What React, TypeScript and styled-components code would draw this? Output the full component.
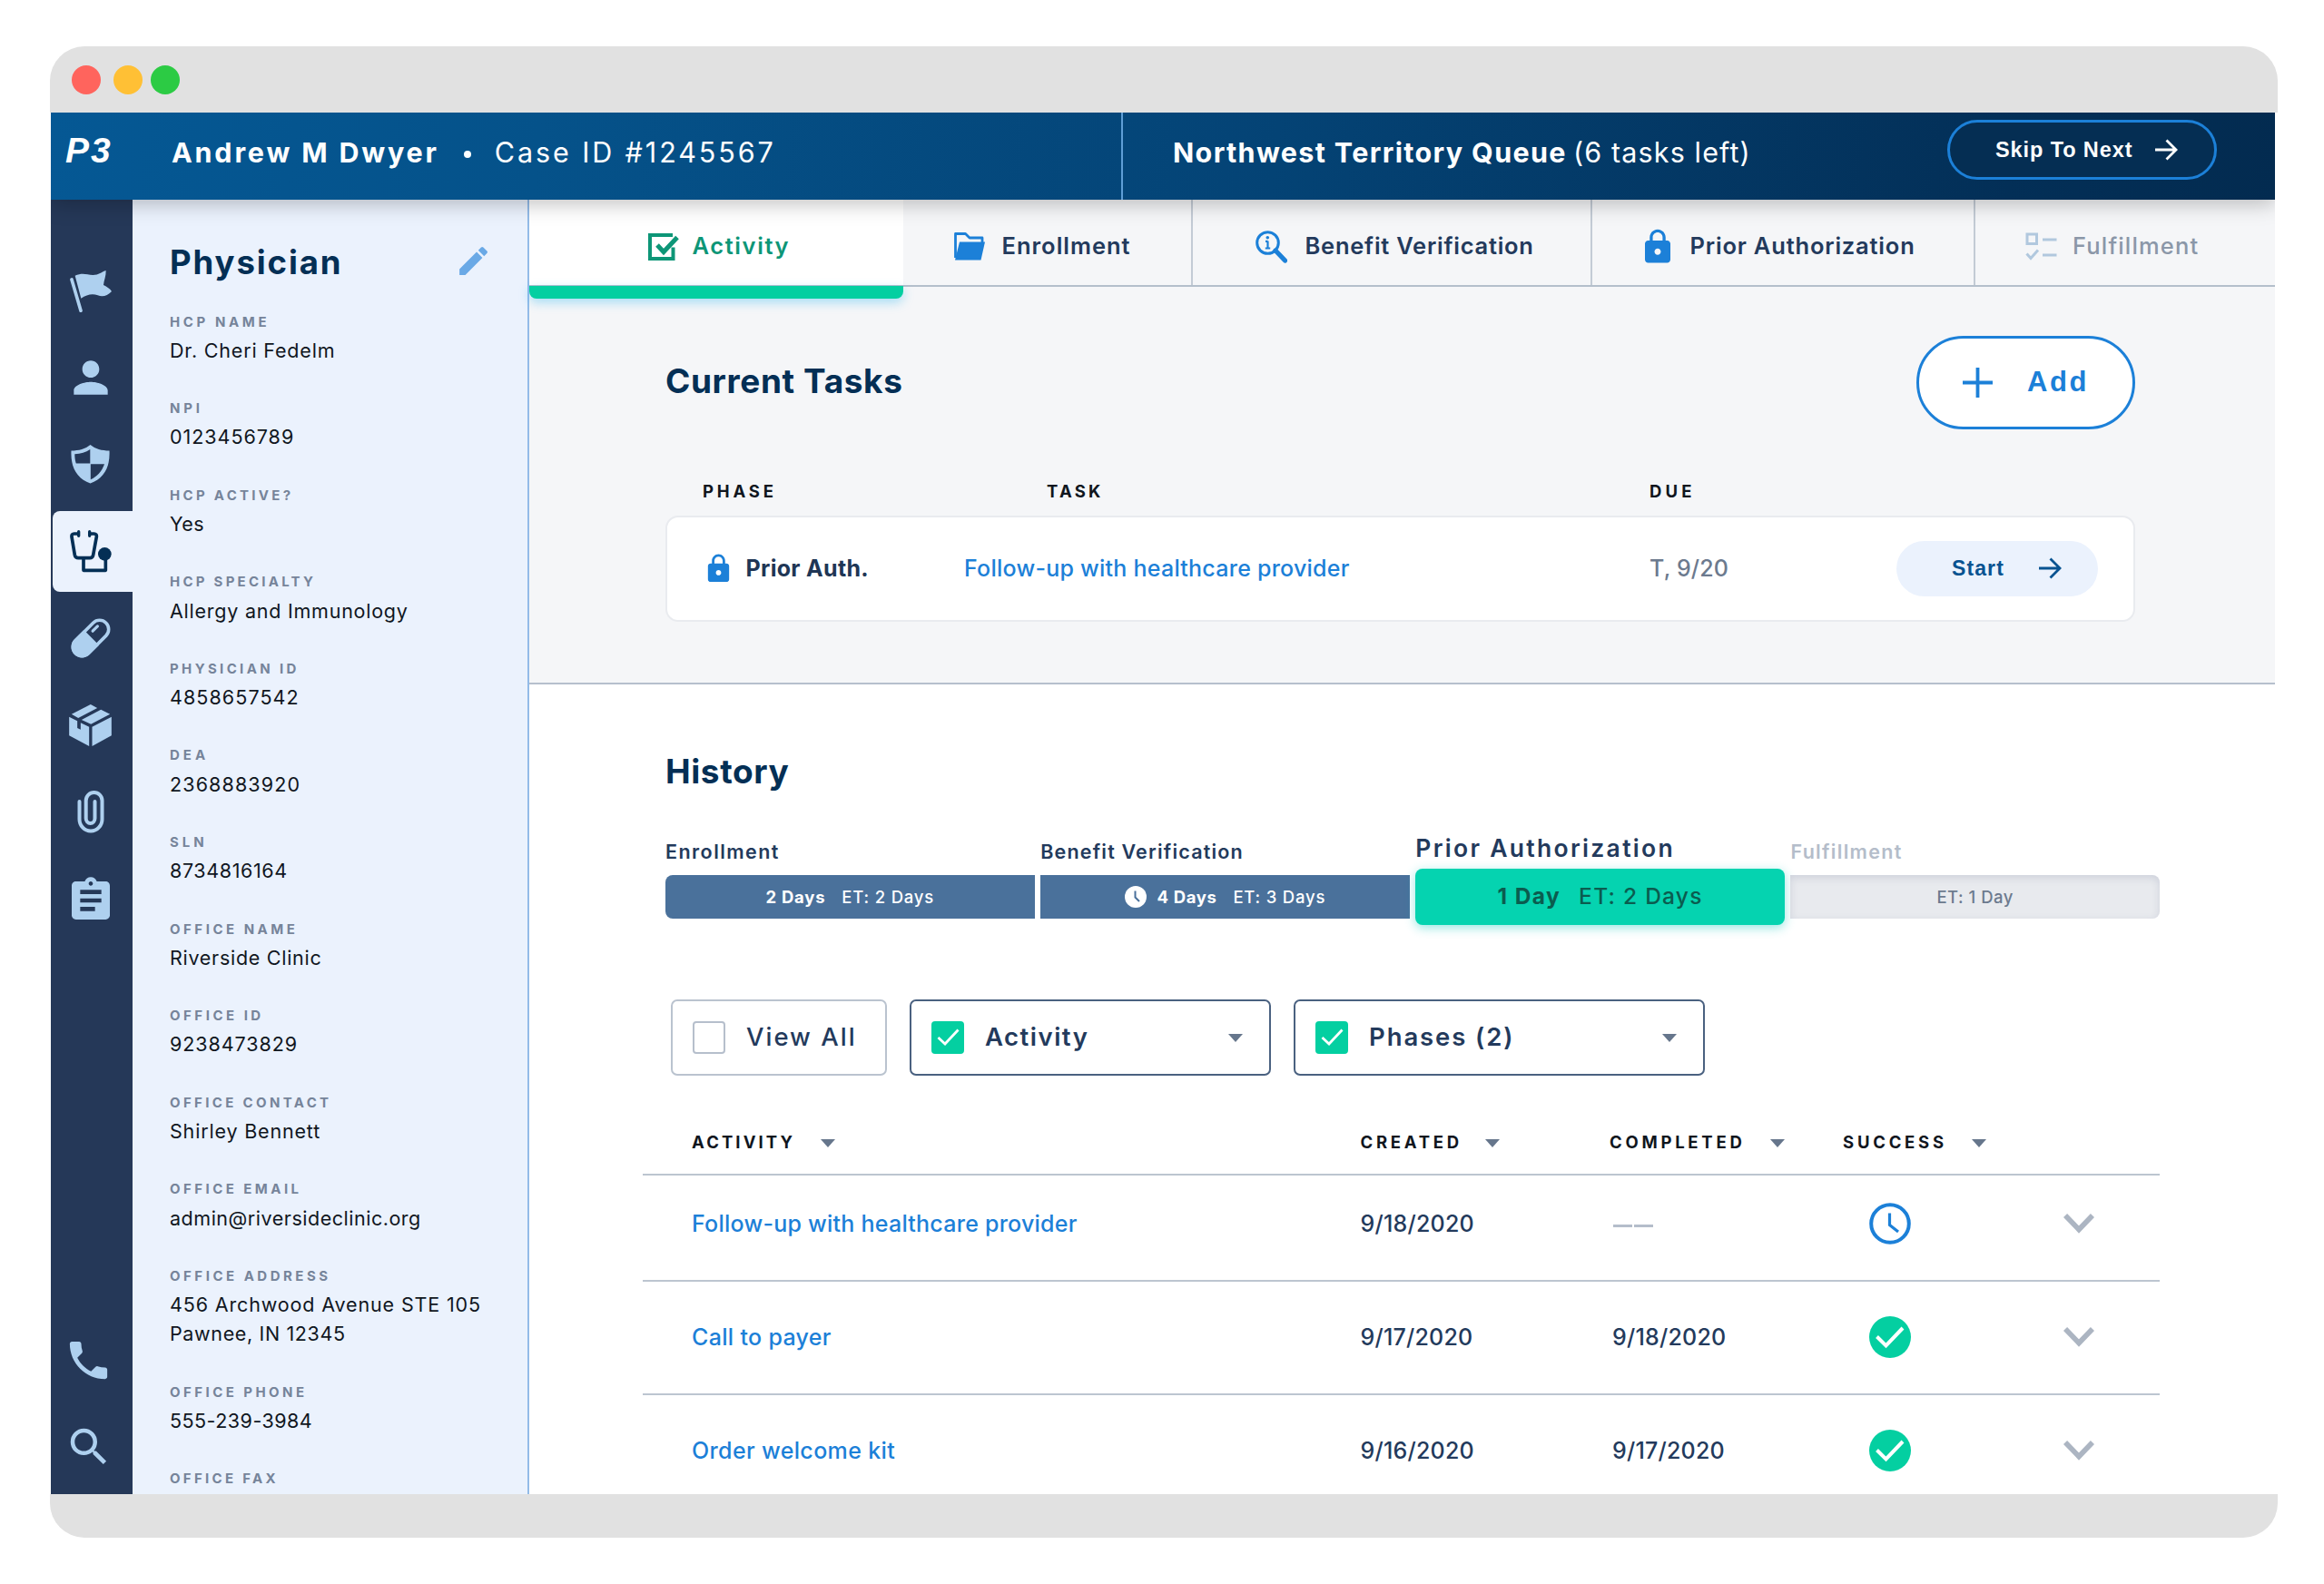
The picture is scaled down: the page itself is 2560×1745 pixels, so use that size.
import React from "react";
import styled, { createGlobalStyle, css } from "styled-components";
import { MdPerson, MdPhone, MdSearch, MdAssignment, MdLock, MdEdit } from "react-icons/md";

const c = {
  navy: "#042f55",
  ink: "#233a5c",
  rail: "#253858",
  ice: "#aed0ef",
  pale: "#ebf2fd",
  blue: "#1c80d8",
  green: "#04cfa1",
  line: "#bcc5d0",
  grey: "#6c7a8e",
};

const GlobalStyle = createGlobalStyle`
  * { box-sizing: border-box; }
  body { margin: 0; background: #fff; font-family: "Inter", "Open Sans", sans-serif; }
`;

/* ---------- text ---------- */
const Text = styled.span<{ $size: number; $weight?: number; $ls?: number; $color?: string }>`
  font-size: ${(p) => p.$size}px;
  font-weight: ${(p) => p.$weight ?? 400};
  letter-spacing: ${(p) => p.$ls ?? 0}px;
  color: ${(p) => p.$color ?? c.ink};
  white-space: nowrap;
  line-height: 1.2;
`;
const ButtonText = styled(Text)`
  font-family: "Liberation Sans", Arial, sans-serif;
  padding-top: 1px;
`;

/* ---------- window ---------- */
const Window = styled.div`
  margin: 51px 0 0 55px;
  width: 2454px;
  height: 1643px;
  border-radius: 38px;
  overflow: hidden;
  display: flex;
  flex-direction: column;
`;
const TitleBar = styled.div`
  height: 73px;
  flex: none;
  background: #e1e1e1;
  display: flex;
  align-items: center;
  padding-left: 24px;
`;
const Light = styled.i<{ $color: string; $gap: number }>`
  width: 32px;
  height: 32px;
  border-radius: 50%;
  background: ${(p) => p.$color};
  margin-right: ${(p) => p.$gap}px;
`;
const BottomBar = styled.div`
  flex: none;
  height: 48px;
  background: #e1e1e1;
`;
const Body = styled.div`
  height: 1522px;
  flex: none;
  width: 2450px;
  margin-left: 1px;
  overflow: hidden;
  display: flex;
  flex-direction: column;
`;

/* ---------- header ---------- */
const Header = styled.header`
  position: relative;
  z-index: 3;
  height: 96px;
  flex: none;
  display: flex;
  color: #fff;
  background: linear-gradient(97deg, #055894 0%, #05528a 22%, #044375 55%, #032f57 88%, #032b50 100%);
  box-shadow: 0 4px 22px rgba(0, 0, 0, 0.26);
`;
const HeaderLeft = styled.div`
  width: 1181px;
  border-right: 2px solid #5f9ed6;
  padding: 0 0 8px 16px;
  display: flex;
  align-items: center;
`;
const HeaderRight = styled.div`
  flex: 1;
  padding: 0 64px 8px 55px;
  display: flex;
  align-items: center;
  gap: 7px;
`;
const Brand = styled.span`
  width: 117px;
  font: italic 700 39px "Liberation Sans", Arial, sans-serif;
  letter-spacing: 2px;
  margin-bottom: 5px;
`;
const Bullet = styled.i`
  width: 8px;
  height: 8px;
  border-radius: 50%;
  background: #fff;
  margin: 4px 26px 0 27px;
`;
const SkipButton = styled.button`
  margin: 0 0 6px auto;
  width: 297px;
  height: 66px;
  border: 3px solid ${c.blue};
  border-radius: 33px;
  background: #052e53;
  padding: 0 40px 0 50px;
  display: flex;
  align-items: center;
  justify-content: space-between;
`;

/* ---------- rail ---------- */
const Columns = styled.div`
  flex: 1;
  display: flex;
  min-height: 0;
`;
const Rail = styled.nav`
  width: 90px;
  flex: none;
  background: ${c.rail};
  padding: 53px 0 4px;
  display: flex;
  flex-direction: column;
`;
const RailItem = styled.div<{ $nudge?: number; $drop?: number }>`
  height: 95.6px;
  flex: none;
  display: flex;
  align-items: center;
  justify-content: center;
  color: ${c.ice};
  padding-right: ${(p) => p.$nudge ?? 3}px;
  padding-top: ${(p) => p.$drop ?? 0}px;
`;
const RailActive = styled.div`
  margin: 3px 0 3.6px 2px;
  height: 89px;
  flex: none;
  border-radius: 8px 0 0 8px;
  background: ${c.pale};
  display: flex;
  align-items: center;
  justify-content: center;
  padding-right: 4px;
`;
const RailSpacer = styled.div`
  flex: 1;
`;

/* ---------- physician panel ---------- */
const Panel = styled.aside`
  width: 437px;
  flex: none;
  background: ${c.pale};
  border-right: 2px solid #93bbe8;
  padding: 44px 0 0 41px;
  overflow: hidden;
`;
const PanelHead = styled.div`
  height: 46px;
  padding-right: 39px;
  margin-bottom: 34.6px;
  display: flex;
  align-items: center;
  justify-content: space-between;
  color: #6aa9e6;
`;
const PanelTitle = styled.h1`
  margin: 0;
  padding-top: 4px;
  font-size: 36.5px;
  font-weight: 700;
  line-height: 46px;
  letter-spacing: 1.9px;
  color: ${c.navy};
`;
const Field = styled.div`
  margin-bottom: 38.4px;
`;
const FieldLabel = styled.div<{ $ls: number }>`
  font-size: 15px;
  font-weight: 700;
  line-height: 20px;
  letter-spacing: ${(p) => p.$ls}px;
  color: #76849a;
  margin-bottom: 5.2px;
`;
const FieldValue = styled.div<{ $ls: number }>`
  font-size: 21.5px;
  font-weight: 400;
  line-height: 32px;
  letter-spacing: ${(p) => p.$ls - 0.08}px;
  color: #10161e;
`;

/* ---------- tabs ---------- */
const Main = styled.main`
  flex: 1;
  min-width: 0;
  background: #fff;
`;
const Tabs = styled.div`
  height: 96px;
  display: flex;
  background: #f5f6f8;
  border-bottom: 2px solid #b4bfcb;
`;
const Tab = styled.div<{ $w: number; $pad: number; $gap: number; $active?: boolean; $last?: boolean }>`
  position: relative;
  width: ${(p) => p.$w}px;
  flex: none;
  display: flex;
  align-items: center;
  gap: ${(p) => p.$gap}px;
  padding: ${(p) => (p.$last ? 8 : 9.5)}px 0 0 ${(p) => p.$pad}px;
  color: ${c.blue};
  border-right: ${(p) => (p.$active || p.$last ? "none" : "2px solid #c3cbd5")};
  ${(p) =>
    p.$active &&
    css`
      background: #fff;
      &::after {
        content: "";
        position: absolute;
        left: 0;
        right: 0;
        top: 95px;
        height: 14px;
        background: ${c.green};
        border-radius: 0 0 8px 8px;
        box-shadow: 0 4px 12px rgba(40, 180, 240, 0.4);
      }
    `}
`;

/* ---------- current tasks ---------- */
const Current = styled.section`
  height: 438px;
  background: #f5f6f8;
  border-bottom: 2px solid #b6c0cd;
  padding: 54px 154px 0 150px;
`;
const CurrentHead = styled.div`
  height: 102px;
  display: flex;
  align-items: center;
  justify-content: space-between;
`;
const SectionTitle = styled.h2<{ $ls: number }>`
  margin: 0 0 3px 0;
  font-size: 37px;
  font-weight: 700;
  line-height: 46px;
  letter-spacing: ${(p) => p.$ls}px;
  color: ${c.navy};
`;
const AddButton = styled.button`
  width: 241px;
  height: 103px;
  border: 3.5px solid ${c.blue};
  border-radius: 52px;
  background: #fff;
  padding: 0 0 0 48px;
  display: flex;
  align-items: center;
  gap: 38px;
`;
const TaskHead = styled.div`
  display: grid;
  grid-template-columns: 379px 664px 1fr;
  padding-left: 41px;
  margin-top: 57px;
  height: 24px;
  align-items: center;
`;
const TaskCard = styled.div`
  margin-top: 15px;
  height: 117px;
  background: #fff;
  border: 2px solid #e9ebef;
  border-radius: 14px;
  padding: 0 39px 1px 45px;
  display: grid;
  grid-template-columns: 282px 755px 1fr auto;
  align-items: center;
`;
const Phase = styled.div`
  display: flex;
  align-items: center;
  gap: 12.5px;
  color: ${c.blue};
  margin-left: -6px;
`;
const StartButton = styled.button`
  width: 222px;
  height: 61px;
  border: 0;
  border-radius: 31px;
  background: ${c.pale};
  padding: 0 40px 0 61px;
  display: flex;
  align-items: center;
  justify-content: space-between;
`;

/* ---------- history ---------- */
const History = styled.section`
  padding: 73px 127px 0 125px;
`;
const HistoryHead = styled.div`
  height: 46px;
  padding-left: 25px;
`;
const Timeline = styled.div`
  height: 95px;
  margin: 44px 0 0 25px;
  display: grid;
  grid-template-columns: repeat(4, 1fr);
  column-gap: 6.6px;
`;
const Segment = styled.div<{ $current?: boolean }>`
  display: flex;
  flex-direction: column;
  justify-content: flex-end;
  margin-bottom: ${(p) => (p.$current ? -7 : 0)}px;
`;
const SegmentLabel = styled.div<{ $current?: boolean; $muted?: boolean; $ls: number }>`
  font-size: ${(p) => (p.$current ? 26.5 : 21.5)}px;
  line-height: ${(p) => (p.$current ? 32 : 28)}px;
  margin-bottom: ${(p) => (p.$current ? 7 : 12.4)}px;
  font-weight: 600;
  letter-spacing: ${(p) => p.$ls}px;
  color: ${(p) => (p.$muted ? "#b4bdca" : c.ink)};
`;
const Bar = styled.div<{ $kind: "first" | "mid" | "current" | "future" }>`
  display: flex;
  align-items: center;
  justify-content: center;
  flex: none;
  height: ${(p) => (p.$kind === "current" ? 62 : 48)}px;
  border-radius: ${(p) => ({ first: "8px 0 0 8px", mid: "0", current: "8px", future: "0 8px 8px 0" })[p.$kind]};
  background: ${(p) => ({ first: "#4a719b", mid: "#4a719b", current: "#05d3b0", future: "#e8eaee" })[p.$kind]};
  gap: ${(p) => (p.$kind === "current" ? 20 : 18)}px;
  ${(p) => p.$kind === "current" && css`box-shadow: 0 3px 12px rgba(20, 200, 190, 0.45);`}
  ${(p) => p.$kind === "future" && css`box-shadow: inset 0 3px 8px rgba(120, 130, 160, 0.24);`}
`;
const Late = styled.span`
  display: flex;
  align-items: center;
  gap: 12px;
`;
const Filters = styled.div`
  margin: 88.5px 0 0 31px;
  display: flex;
  gap: 25px;
`;
const Filter = styled.div<{ $w: number; $on?: boolean }>`
  width: ${(p) => p.$w}px;
  height: 84px;
  border: 2.5px solid ${(p) => (p.$on ? "#4a6180" : "#bac3cf")};
  border-radius: 7px;
  padding: 0 29px 0 22px;
  display: flex;
  align-items: center;
  gap: 23px;
`;
const Check = styled.span<{ $on?: boolean }>`
  width: 36px;
  height: 36px;
  flex: none;
  border-radius: 4px;
  display: flex;
  align-items: center;
  justify-content: center;
  background: ${(p) => (p.$on ? c.green : "#fff")};
  border: ${(p) => (p.$on ? "none" : "2.5px solid #b6bfcc")};
`;
const Caret = styled.i<{ $push?: boolean }>`
  width: 0;
  height: 0;
  border: 8px solid transparent;
  border-top: 9px solid #66768c;
  border-bottom: 0;
  margin-left: ${(p) => (p.$push ? "auto" : "0")};
  margin-top: 2px;
`;
const Row = styled.div<{ $h: number; $lift?: number }>`
  height: ${(p) => p.$h}px;
  padding: 0 0 ${(p) => p.$lift ?? 0}px 54px;
  border-bottom: 2px solid ${c.line};
  display: grid;
  grid-template-columns: 736.5px 274.5px 257px 1fr;
  align-items: center;
`;
const HeadRow = styled(Row)`
  margin-top: 47px;
`;
const HeadCell = styled.div<{ $gap: number }>`
  display: flex;
  align-items: center;
  gap: ${(p) => p.$gap}px;
`;
const StatusCell = styled.div`
  display: flex;
  align-items: center;
  justify-content: space-between;
  padding: 0 72px 0 28.5px;
`;
const Dashes = styled.span`
  display: flex;
  gap: 2px;
  margin: 4px 0 0 4px;
  i { width: 21px; height: 3px; background: #b4bdca; }
`;
const DateText = styled(Text)`
  padding-left: 3px;
`;

/* ---------- icons ---------- */
const FlagIcon = () => (
  <svg width="46" height="46" viewBox="0 0 138 138" fill={c.ice}>
    <path d="M6 30 L36 133" stroke={c.ice} strokeWidth="11" strokeLinecap="round" />
    <path d="M17 17 C42 6 55 14 76 15 C95 15 106 4 119 0 C120 18 112 34 111 48 C120 53 133 60 138 69 C124 84 108 88 92 82 C72 75 55 81 37 92 Z" />
  </svg>
);
const ShieldIcon = () => (
  <svg width="43" height="43" viewBox="0 0 43 43">
    <path fill={c.ice} d="M21.500 0 C27 4.500 34 6.500 42.500 6.500 C43.500 25 36 37.500 21.500 42.500 C7 37.500 -.5 25 .5 6.500 C9 6.500 16 4.500 21.500 0Z" />
    <path fill={c.rail} d="M21.300 5 V20.600 H5.800 C4.600 17 4.300 13.500 4.300 10.200 C11 10 16.500 8.300 21.300 5Z" />
    <path fill={c.rail} d="M21.800 21.200 H37 C34.400 29 29 35 21.800 38.200Z" />
  </svg>
);
const StethoscopeIcon = () => (
  <svg width="47" height="47" viewBox="0 0 141 141" fill="none" stroke={c.navy} strokeWidth="11" strokeLinejoin="round">
    <path d="M28 12 H14 Q5 12 6 22 L16 82 Q18 92 28 92 H66 Q75 92 77 82 L88 22 Q89 12 80 12 H66" />
    <path d="M29 5 V19 M65 5 V19" strokeLinecap="round" strokeWidth="10" />
    <path d="M45 94 V133 H118 V90" />
    <circle cx="115" cy="79" r="22" fill={c.navy} stroke="none" />
  </svg>
);
const PillIcon = () => (
  <svg width="46" height="46" viewBox="0 0 46 46">
    <g transform="rotate(45 23 23)">
      <rect x="13" y="-.7" width="20" height="47.400" rx="10" fill="none" stroke={c.ice} strokeWidth="3.600" />
      <path d="M11.200 22 H34.800 V36.700 A11.800 11.800 0 0 1 11.200 36.700Z" fill={c.ice} />
      <path d="M19 8.500 V16" stroke={c.ice} strokeWidth="3.200" strokeLinecap="round" />
    </g>
  </svg>
);
const BoxIcon = () => (
  <svg width="47" height="46" viewBox="0 0 140 138" fill={c.ice}>
    <path d="M8 32 L71 0 L93 12 L30 45Z" />
    <path d="M41 51 L105 17 L135 32 L72 65Z" />
    <path d="M0 41 L27 55 V78 L38 83 V61 L66 74 V138 L0 103Z" />
    <path d="M76 74 L140 41 V103 L76 138Z" />
  </svg>
);
const ClipIcon = () => (
  <svg width="30" height="47" viewBox="0 0 30 47" fill="none" stroke={c.ice} strokeWidth="4" strokeLinecap="round">
    <path d="M2.500 12 V31.500 A12.500 13 0 0 0 27.500 31.500 V11 A8.900 9 0 0 0 9.700 11 V30.500 A4.900 5.500 0 0 0 19.500 30.500 V12" />
  </svg>
);
const ArrowIcon = ({ color }: { color: string }) => (
  <svg width="25" height="24" viewBox="0 0 25 24" fill="none" stroke={color} strokeWidth="2.800">
    <path d="M0 12 H22.500 M12.500 1.500 L23 12 L12.500 22.500" />
  </svg>
);
const PlusIcon = () => (
  <svg width="33" height="33" viewBox="0 0 33 33" stroke={c.blue} strokeWidth="3.800">
    <path d="M16.500 0 V33 M0 16.500 H33" />
  </svg>
);
const ActivityIcon = () => (
  <svg width="34" height="30" viewBox="0 0 34 30" fill="none" stroke="#0d9677">
    <path d="M27 2 H2 V28 H27.500 V15.500" strokeWidth="4" />
    <path d="M10 13 L17 20.500 L32 4.500" strokeWidth="5" />
  </svg>
);
const FolderIcon = () => (
  <svg width="34" height="31" viewBox="0 0 34 31">
    <path d="M1.500 28 V1.500 H12.500 L17 6 H31 V12" fill="none" stroke={c.blue} strokeWidth="2.800" strokeLinejoin="round" />
    <path d="M6 10.500 H34 L29.500 30.500 H1 Z" fill={c.blue} />
  </svg>
);
const InfoSearchIcon = () => (
  <svg width="35" height="36" viewBox="0 0 35 36" fill="none" stroke={c.blue}>
    <circle cx="13.500" cy="13.500" r="11.800" strokeWidth="3" />
    <path d="M22 22 L32.500 33" strokeWidth="5.200" strokeLinecap="round" />
    <path d="M13.500 11.500 V20 M11 11.800 H13.500 M10.800 19.500 H16.200" strokeWidth="2.200" />
    <circle cx="13.300" cy="7.700" r="1.800" fill={c.blue} stroke="none" />
  </svg>
);
const ChecklistIcon = () => (
  <svg width="35" height="31" viewBox="0 0 35 31" fill="none" stroke="#b1c8de" strokeWidth="3">
    <path d="M2 2 H12.500 V12.500 H2Z M19 8 H34.500 M19 25 H34.500 M1.500 23.500 L6 28.500 L14 19.500" />
  </svg>
);
const CheckMark = () => (
  <svg width="25" height="19" viewBox="0 0 25 19" fill="none" stroke="#fff" strokeWidth="2.800">
    <path d="M1.500 10 L9 17 L23.500 1.500" />
  </svg>
);
const SmallClock = () => (
  <svg width="24" height="24" viewBox="0 0 24 24">
    <circle cx="12" cy="12" r="12" fill="#fff" />
    <path d="M11.500 5.500 V12.500 L16 17" fill="none" stroke="#4a719b" strokeWidth="2" />
  </svg>
);
const PendingIcon = () => (
  <svg width="46" height="46" viewBox="0 0 46 46" fill="none" stroke={c.blue}>
    <circle cx="23" cy="23" r="20.800" strokeWidth="4" />
    <path d="M22.500 11.500 V24.500 L32 32" strokeWidth="3.200" />
  </svg>
);
const DoneIcon = () => (
  <svg width="46" height="46" viewBox="0 0 46 46">
    <circle cx="23" cy="23" r="23" fill={c.green} />
    <path d="M8.500 22.500 L18.500 32.500 L37 13" fill="none" stroke="#fff" strokeWidth="4" />
  </svg>
);
const ChevronIcon = () => (
  <svg width="34" height="22" viewBox="0 0 34 22" fill="none" stroke="#acb5c2" strokeWidth="5.800">
    <path d="M2 2 L17 17.500 L32 2" />
  </svg>
);

/* ---------- data ---------- */
const fields: { label: string; ls: number; values: [string, number][] }[] = [
  { label: "HCP NAME", ls: 3.6, values: [["Dr. Cheri Fedelm", 0.9]] },
  { label: "NPI", ls: 3.8, values: [["0123456789", 1.05]] },
  { label: "HCP ACTIVE?", ls: 3.3, values: [["Yes", 0.5]] },
  { label: "HCP SPECIALTY", ls: 3.25, values: [["Allergy and Immunology", 0.84]] },
  { label: "PHYSICIAN ID", ls: 3.35, values: [["4858657542", 1.15]] },
  { label: "DEA", ls: 4, values: [["2368883920", 1.2]] },
  { label: "SLN", ls: 4, values: [["8734816164", 0.7]] },
  { label: "OFFICE NAME", ls: 3.5, values: [["Riverside Clinic", 0.8]] },
  { label: "OFFICE ID", ls: 3.5, values: [["9238473829", 1.0]] },
  { label: "OFFICE CONTACT", ls: 3.35, values: [["Shirley Bennett", 0.9]] },
  { label: "OFFICE EMAIL", ls: 3.45, values: [["admin@riversideclinic.org", 0.6]] },
  { label: "OFFICE ADDRESS", ls: 3.5, values: [["456 Archwood Avenue STE 105", 0.94], ["Pawnee, IN 12345", 0.72]] },
  { label: "OFFICE PHONE", ls: 3.45, values: [["555-239-3984", 0.55]] },
  { label: "OFFICE FAX", ls: 3.3, values: [] },
];

const heads: { label: string; ls: number; gap: number }[] = [
  { label: "ACTIVITY", ls: 3.1, gap: 28 },
  { label: "CREATED", ls: 3.75, gap: 25.5 },
  { label: "COMPLETED", ls: 3.75, gap: 27 },
  { label: "SUCCESS", ls: 3.77, gap: 27 },
];

const rows = [
  { name: "Follow-up with healthcare provider", ls: 0.24, created: "9/18/2020", completed: null, h: 117.6, lift: 8 },
  { name: "Call to payer", ls: 0.32, created: "9/17/2020", completed: "9/18/2020", h: 124.6, lift: 0 },
  { name: "Order welcome kit", ls: 0.36, created: "9/16/2020", completed: "9/17/2020", h: 124.6, lift: 0 },
];

export default function App() {
  return (
    <>
      <GlobalStyle />
      <Window>
        <TitleBar>
          <Light $color="#ff645d" $gap={14} />
          <Light $color="#ffc035" $gap={9} />
          <Light $color="#2ccb44" $gap={0} />
        </TitleBar>
        <Body>
          <Header>
            <HeaderLeft>
              <Brand>P3</Brand>
              <Text $size={30.5} $weight={700} $ls={2.8} $color="#fff">Andrew M Dwyer</Text>
              <Bullet />
              <Text $size={30.5} $ls={2.9} $color="#fff">Case ID #1245567</Text>
            </HeaderLeft>
            <HeaderRight>
              <Text $size={30.5} $weight={700} $ls={1.35} $color="#fff">Northwest Territory Queue</Text>
              <Text $size={30.5} $ls={1.15} $color="#fff">(6 tasks left)</Text>
              <SkipButton>
                <ButtonText $size={23.5} $weight={700} $ls={0.9} $color="#fff">Skip To Next</ButtonText>
                <ArrowIcon color="#fff" />
              </SkipButton>
            </HeaderRight>
          </Header>
          <Columns>
            <Rail>
              <RailItem><FlagIcon /></RailItem>
              <RailItem><MdPerson size={56} /></RailItem>
              <RailItem><ShieldIcon /></RailItem>
              <RailActive><StethoscopeIcon /></RailActive>
              <RailItem><PillIcon /></RailItem>
              <RailItem><BoxIcon /></RailItem>
              <RailItem><ClipIcon /></RailItem>
              <RailItem $drop={5}><MdAssignment size={56} /></RailItem>
              <RailSpacer />
              <RailItem $nudge={7}><MdPhone size={55} /></RailItem>
              <RailItem $nudge={7}><MdSearch size={54} /></RailItem>
            </Rail>
            <Panel>
              <PanelHead>
                <PanelTitle>Physician</PanelTitle>
                <MdEdit size={41} />
              </PanelHead>
              {fields.map((f) => (
                <Field key={f.label}>
                  <FieldLabel $ls={f.ls}>{f.label}</FieldLabel>
                  {f.values.map(([line, ls]) => (
                    <FieldValue key={line} $ls={ls}>{line}</FieldValue>
                  ))}
                </Field>
              ))}
            </Panel>
            <Main>
              <Tabs>
                <Tab $w={412} $pad={131} $gap={14.5} $active>
                  <ActivityIcon />
                  <Text $size={25.5} $weight={600} $ls={1.6} $color="#0d9677">Activity</Text>
                </Tab>
                <Tab $w={319} $pad={56} $gap={18.5}>
                  <FolderIcon />
                  <Text $size={25.5} $weight={600} $ls={1}>Enrollment</Text>
                </Tab>
                <Tab $w={440} $pad={69} $gap={19.5}>
                  <InfoSearchIcon />
                  <Text $size={25.5} $weight={600} $ls={0.75}>Benefit Verification</Text>
                </Tab>
                <Tab $w={422} $pad={51} $gap={14.5}>
                  <MdLock size={42} />
                  <Text $size={25.5} $weight={600} $ls={0.8}>Prior Authorization</Text>
                </Tab>
                <Tab $w={330} $pad={54.5} $gap={17.5} $last>
                  <ChecklistIcon />
                  <Text $size={25.5} $weight={500} $ls={1.15} $color="#8b97a8">Fulfillment</Text>
                </Tab>
              </Tabs>
              <Current>
                <CurrentHead>
                  <SectionTitle $ls={0.6}>Current Tasks</SectionTitle>
                  <AddButton>
                    <PlusIcon />
                    <Text $size={31} $weight={700} $ls={2.6} $color={c.blue}>Add</Text>
                  </AddButton>
                </CurrentHead>
                <TaskHead>
                  <Text $size={18.5} $weight={700} $ls={3.8} $color="#10161e">PHASE</Text>
                  <Text $size={18.5} $weight={700} $ls={3.2} $color="#10161e">TASK</Text>
                  <Text $size={18.5} $weight={700} $ls={4.2} $color="#10161e">DUE</Text>
                </TaskHead>
                <TaskCard>
                  <Phase>
                    <MdLock size={35} />
                    <Text $size={25} $weight={650} $ls={0.3} $color="#203655">Prior Auth.</Text>
                  </Phase>
                  <Text $size={25} $weight={500} $ls={0.24} $color={c.blue}>Follow-up with healthcare provider</Text>
                  <Text $size={25} $weight={500} $ls={0.15} $color={c.grey}>T, 9/20</Text>
                  <StartButton>
                    <ButtonText $size={23} $weight={700} $ls={1.1} $color="#085391">Start</ButtonText>
                    <ArrowIcon color="#085391" />
                  </StartButton>
                </TaskCard>
              </Current>
              <History>
                <HistoryHead>
                  <SectionTitle $ls={0.6}>History</SectionTitle>
                </HistoryHead>
                <Timeline>
                  <Segment>
                    <SegmentLabel $ls={1.45}>Enrollment</SegmentLabel>
                    <Bar $kind="first">
                      <Text $size={18.5} $weight={700} $ls={0.75} $color="#fff">2 Days</Text>
                      <Text $size={18.5} $weight={500} $ls={0.82} $color="#fff">ET: 2 Days</Text>
                    </Bar>
                  </Segment>
                  <Segment>
                    <SegmentLabel $ls={1.19}>Benefit Verification</SegmentLabel>
                    <Bar $kind="mid">
                      <Late>
                        <SmallClock />
                        <Text $size={18.5} $weight={700} $ls={0.6} $color="#fff">4 Days</Text>
                      </Late>
                      <Text $size={18.5} $weight={500} $ls={0.8} $color="#fff">ET: 3 Days</Text>
                    </Bar>
                  </Segment>
                  <Segment $current>
                    <SegmentLabel $ls={2.3} $current>Prior Authorization</SegmentLabel>
                    <Bar $kind="current">
                      <Text $size={24.5} $weight={700} $ls={1.4} $color="#0b5c4f">1 Day</Text>
                      <Text $size={24.5} $weight={500} $ls={1.25} $color="#0b5c4f">ET: 2 Days</Text>
                    </Bar>
                  </Segment>
                  <Segment>
                    <SegmentLabel $ls={1.3} $muted>Fulfillment</SegmentLabel>
                    <Bar $kind="future">
                      <Text $size={18.5} $weight={500} $ls={0.5} $color={c.grey}>ET: 1 Day</Text>
                    </Bar>
                  </Segment>
                </Timeline>
                <Filters>
                  <Filter $w={238}>
                    <Check />
                    <Text $size={27.5} $weight={500} $ls={2}>View All</Text>
                  </Filter>
                  <Filter $w={398} $on>
                    <Check $on><CheckMark /></Check>
                    <Text $size={27.5} $weight={600} $ls={1.5}>Activity</Text>
                    <Caret $push />
                  </Filter>
                  <Filter $w={453} $on>
                    <Check $on><CheckMark /></Check>
                    <Text $size={27.5} $weight={600} $ls={1.9}>Phases (2)</Text>
                    <Caret $push />
                  </Filter>
                </Filters>
                <HeadRow $h={63} $lift={7.5}>
                  {heads.map((h) => (
                    <HeadCell key={h.label} $gap={h.gap}>
                      <Text $size={18.5} $weight={700} $ls={h.ls} $color="#10161e">{h.label}</Text>
                      <Caret />
                    </HeadCell>
                  ))}
                </HeadRow>
                {rows.map((r) => (
                  <Row key={r.name} $h={r.h} $lift={r.lift}>
                    <Text $size={25} $weight={500} $ls={r.ls} $color={c.blue}>{r.name}</Text>
                    <Text $size={25} $weight={550} $ls={0.22}>{r.created}</Text>
                    {r.completed ? (
                      <DateText $size={25} $weight={550} $ls={0.22}>{r.completed}</DateText>
                    ) : (
                      <Dashes><i /><i /></Dashes>
                    )}
                    <StatusCell>
                      {r.completed ? <DoneIcon /> : <PendingIcon />}
                      <ChevronIcon />
                    </StatusCell>
                  </Row>
                ))}
              </History>
            </Main>
          </Columns>
        </Body>
        <BottomBar />
      </Window>
    </>
  );
}
